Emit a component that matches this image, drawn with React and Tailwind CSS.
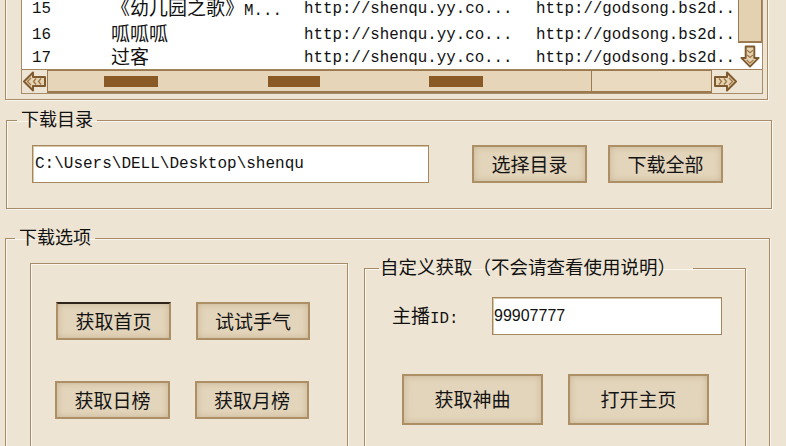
import React from 'react'

const rows = [
  { n: '15', cn: '《幼儿园之歌》', en: 'M...', h: 'h-[28px]' },
  { n: '16', cn: '呱呱呱', en: '', h: 'h-[23px]' },
  { n: '17', cn: '过客', en: '', h: 'h-[23px]' },
]

function Arrow({ dir }) {
  const rot = dir === 'left' ? 0 : dir === 'right' ? 180 : 270
  return (
    <svg width="25" height="23" viewBox="0 0 25 23">
      <g transform={`rotate(${rot} 12.5 11.5)`}>
        <polygon
          points="2,11.5 11,2.5 11,7 23,7 23,16 11,16 11,20.5"
          fill="#e6d3b1"
          stroke="#7e5a2e"
          strokeWidth="2"
          strokeLinejoin="round"
        />
        <path d="M9 8 L5.5 11.5 L9 15 M14 8.5 L11.5 11.5 L14 14.5 M19 8.5 L16.5 11.5 L19 14.5" fill="none" stroke="#9c7647" strokeWidth="1.3" />
      </g>
    </svg>
  )
}

function Btn({ children, className }) {
  return (
    <button
      className={
        'flex items-center justify-center border-2 border-[#ad8f65] bg-[#e3d5bb] shadow-[inset_0_0_7px_rgba(150,118,76,0.35)] text-[19px] text-[#141414] font-["Noto_Sans_CJK_SC",sans-serif] ' +
        className
      }
    >
      {children}
    </button>
  )
}

export default function App() {
  return (
    <div className="w-[786px] h-[446px] overflow-hidden bg-[#eee4d3] flex flex-col font-['Noto_Sans_CJK_SC',sans-serif] text-[#111]">
      {/* song list group */}
      <div className="ml-[5px] w-[763px] h-[121px] shrink-0 -mt-[21px] border border-[#a68c68] shadow-[1px_1px_0_#fbf7ef,inset_1px_1px_0_#fbf7ef] pt-[14px] pl-[15px]">
        <div className="w-[742px] border border-[#a68c68] flex bg-white">
          <div className="w-[716px] flex flex-col">
            <div className="h-[74px]">
              {rows.map((r) => (
                <div key={r.n} className={'grid grid-cols-[79px_193px_232px_1fr] pl-[10px] items-center leading-[18px] ' + r.h}>
                  <span className="font-['Liberation_Mono',monospace] text-[15.8px]">{r.n}</span>
                  <span className="whitespace-nowrap">
                    <span className="text-[19px]">{r.cn}</span>
                    <span className="font-['Liberation_Mono',monospace] text-[15.8px]">{r.en}</span>
                  </span>
                  <span className="font-['Liberation_Mono',monospace] text-[15.8px] whitespace-nowrap">http://shenqu.yy.co...</span>
                  <span className="font-['Liberation_Mono',monospace] text-[15.8px] whitespace-nowrap">http://godsong.bs2d..</span>
                </div>
              ))}
            </div>
            <div className="h-[24px] flex bg-[#eee4d3] border-t border-[#a3845a]">
              <div className="w-[25px] flex items-center justify-center">
                <Arrow dir="left" />
              </div>
              <div className="w-[545px] flex items-center bg-[#e6d5b8] border-x border-t border-b-2 border-[#9b7a4f] pl-[56px]">
                <div className="w-[54px] h-[11px] bg-[#8a5a26]" />
                <div className="w-[52px] h-[11px] bg-[#8a5a26] ml-[110px]" />
                <div className="w-[54px] h-[11px] bg-[#8a5a26] ml-[109px]" />
              </div>
              <div className="w-[120px] bg-[#e9dac0] border-t border-b-2 border-r border-[#9b7a4f]" />
              <div className="w-[26px] flex items-center justify-center">
                <Arrow dir="right" />
              </div>
            </div>
          </div>
          <div className="w-[24px] flex flex-col">
            <div className="h-[48px] bg-[#e4d1b1] border-x border-b-2 border-[#9b7a4f]" />
            <div className="h-[26px] flex items-center justify-center bg-white">
              <Arrow dir="down" />
            </div>
            <div className="h-[24px] bg-[#eee4d3] border-t border-[#a3845a]" />
          </div>
        </div>
      </div>

      {/* download directory */}
      <fieldset className="ml-[6px] w-[766px] h-[99px] shrink-0 mt-[10px] p-0 border border-[#a68c68] shadow-[1px_1px_0_#fbf7ef,inset_1px_1px_0_#fbf7ef]">
        <legend className="ml-[10px] px-[4px] text-[18px] leading-[16px] pb-[4px]">下载目录</legend>
        <div className="flex pt-[15px] pl-[25px]">
          <div className="w-[397px] h-[38px] bg-white border border-[#a5875e] shadow-[inset_1px_1px_0_#d9c7a8] flex items-center pl-[2px] font-['Liberation_Mono',monospace] text-[16px]">
            C:\Users\DELL\Desktop\shenqu
          </div>
          <Btn className="w-[115px] h-[38px] ml-[43px]">选择目录</Btn>
          <Btn className="w-[115px] h-[38px] ml-[21px]">下载全部</Btn>
        </div>
      </fieldset>

      {/* download options */}
      <fieldset className="ml-[5px] w-[765px] h-[260px] shrink-0 mt-[19px] p-0 border border-[#a68c68] shadow-[1px_1px_0_#fbf7ef,inset_1px_1px_0_#fbf7ef]">
        <legend className="ml-[9px] px-[4px] text-[18px] leading-[16px] pb-[4px]">下载选项</legend>
        <div className="flex items-start pl-[24px]">
          <div className="mt-[15px] w-[318px] h-[220px] border border-[#a68c68] shadow-[1px_1px_0_#fbf7ef,inset_1px_1px_0_#fbf7ef] pt-[38px]">
            <div className="flex pl-[25px] gap-[25px]">
              <Btn className="w-[115px] h-[38px] border-t-[#2e241a]">获取首页</Btn>
              <Btn className="w-[114px] h-[38px]">试试手气</Btn>
            </div>
            <div className="flex pl-[24px] gap-[25px] mt-[41px]">
              <Btn className="w-[115px] h-[38px]">获取日榜</Btn>
              <Btn className="w-[114px] h-[38px]">获取月榜</Btn>
            </div>
          </div>
          <fieldset className="mt-[10px] ml-[16px] w-[382px] h-[220px] p-0 border border-[#a68c68] shadow-[1px_1px_0_#fbf7ef,inset_1px_1px_0_#fbf7ef]">
            <legend className="ml-[14px] pl-[1px] pr-[17px] text-[18.5px] leading-[16px] pb-[4px] whitespace-nowrap">自定义获取（不会请查看使用说明）</legend>
            <div className="flex items-center pt-[19px] pl-[27px]">
              <div className="w-[100px] whitespace-nowrap leading-none">
                <span className="text-[19px]">主播</span>
                <span className="font-['Liberation_Mono',monospace] text-[15.8px]">ID:</span>
              </div>
              <div className="w-[230px] h-[38px] bg-white border border-[#a5875e] shadow-[inset_1px_1px_0_#d9c7a8] flex items-center pl-[1px] font-['Liberation_Sans',sans-serif] text-[16px]">
                99907777
              </div>
            </div>
            <div className="flex pl-[37px] gap-[25px] mt-[39px]">
              <Btn className="w-[141px] h-[51px]">获取神曲</Btn>
              <Btn className="w-[141px] h-[51px]">打开主页</Btn>
            </div>
          </fieldset>
        </div>
      </fieldset>
    </div>
  )
}
